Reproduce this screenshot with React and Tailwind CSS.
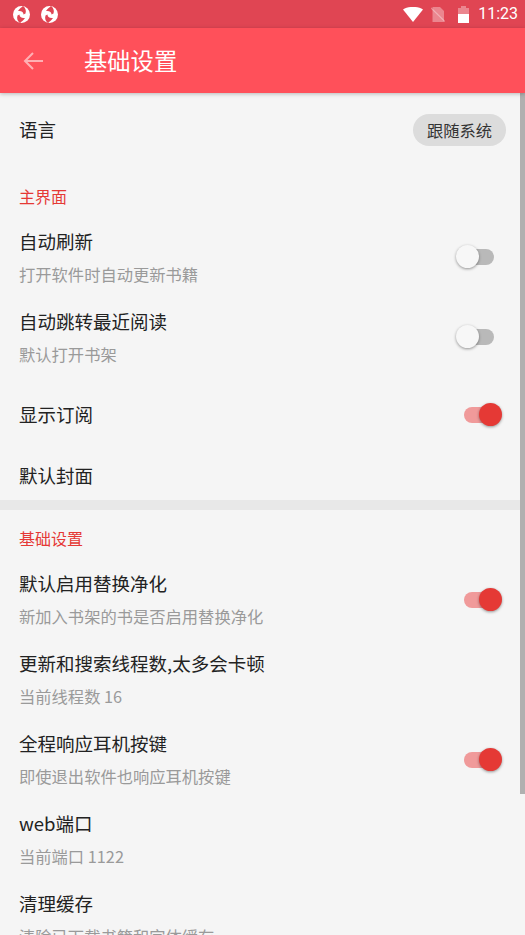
import React from "react";

const font = { fontFamily: '"Noto Sans CJK SC", Roboto, sans-serif' };

function StatusLogo() {
  return (
    <svg width="17" height="17" viewBox="0 0 17 17">
      <circle cx="8.5" cy="8.5" r="8.5" fill="#fff" />
      <path d="M10 0 C12.5 2 13.5 4.5 12.5 7.5 L10.5 8.5 C10.5 6 8.5 4.5 5 5 C6.5 3 8 1.5 10 0 Z" fill="#e04553" />
      <path d="M7 17 C4.5 15 3.5 12.5 4.5 9.5 L6.5 8.5 C6.5 11 8.5 12.5 12 12 C10.5 14 9 15.5 7 17 Z" fill="#e04553" />
    </svg>
  );
}

function Toggle({ on }) {
  if (on) {
    return (
      <div className="relative w-[38px] h-[28px] shrink-0">
        <div className="absolute left-0 right-[2px] top-[6px] h-[16px] rounded-full bg-[#f09a9a]" />
        <div className="absolute right-0 top-[2px] w-[23px] h-[23px] rounded-full bg-[#e53935] shadow-[0_1px_3px_rgba(0,0,0,0.4)]" />
      </div>
    );
  }
  return (
    <div className="relative w-[38px] h-[28px] mr-[8px] shrink-0">
      <div className="absolute left-[2px] right-0 top-[5px] h-[16px] rounded-full bg-[#b9b9b9]" />
      <div className="absolute left-0 top-[1px] w-[23px] h-[23px] rounded-full bg-[#f7f7f7] shadow-[0_1px_3px_rgba(0,0,0,0.4)]" />
    </div>
  );
}

function Row({ title, sub, toggle, height }) {
  return (
    <div className={`flex items-center justify-between pl-[19px] pr-[23px] ${height}`}>
      <div className={sub ? "flex flex-col" : "flex flex-col pb-[2px]"}>
        <div className="text-[18.5px] leading-[24px] text-[#222222] whitespace-nowrap">{title}</div>
        {sub && <div className="mt-[8px] text-[16.3px] leading-[26px] text-[#9a9a9a] whitespace-nowrap">{sub}</div>}
      </div>
      {toggle !== undefined && <Toggle on={toggle} />}
    </div>
  );
}

function SectionTitle({ children, height, top }) {
  return (
    <div className={`pl-[19px] text-[16px] leading-[24px] text-[#e53935] ${height} ${top}`}>{children}</div>
  );
}

export default function App() {
  return (
    <div className="relative w-[525px] h-[935px] overflow-hidden bg-[#f5f5f5]" style={font}>
      <div className="flex items-center justify-between h-[28px] bg-[#e04553] pl-[13px] pr-[7px]">
        <div className="flex items-center gap-[11px]">
          <StatusLogo />
          <StatusLogo />
        </div>
        <div className="flex items-center">
          <svg width="20" height="15" viewBox="0 0 20 15" className="mr-[8px]">
            <path d="M0 2.5 C5.5 -1 14.5 -1 20 2.5 L10 15 Z" fill="#fff" />
          </svg>
          <svg width="14" height="15" viewBox="0 0 14 15" className="mr-[13px]">
            <path d="M1.5 0 H9 L13 4 V15 H1.5 Z" fill="#fff" fillOpacity="0.35" />
            <path d="M0 1 L14 14.5" stroke="#fff" strokeOpacity="0.35" strokeWidth="1.2" />
          </svg>
          <svg width="11" height="17" viewBox="0 0 11 17" className="mr-[9px]">
            <path d="M3 0 H8 V2 H11 V17 H0 V2 H3 Z" fill="#fff" fillOpacity="0.35" />
            <path d="M0 8 H11 V17 H0 Z" fill="#fff" />
          </svg>
          <span className="text-[16px] leading-[20px] text-white" style={{ fontFamily: "Roboto, sans-serif" }}>
            11:23
          </span>
        </div>
      </div>

      <div className="relative z-10 flex items-center h-[65px] bg-[#ff505a] shadow-[0_1px_4px_rgba(0,0,0,0.25)]">
        <svg width="20" height="20" viewBox="0 0 20 20" className="ml-[23px]" fill="none" stroke="#ffb0b4" strokeWidth="2">
          <path d="M20 10 H2 M10 2 L2 10 L10 18" />
        </svg>
        <div className="ml-[41px] text-[23.3px] text-white">基础设置</div>
      </div>

      <div className="flex items-center justify-between h-[74px] pl-[19px] pr-[19px]">
        <div className="text-[18.5px] text-[#222222]">语言</div>
        <div className="flex items-center justify-center w-[93px] h-[32px] rounded-full bg-[#dcdcdc] text-[16.3px] text-[#333333]">
          跟随系统
        </div>
      </div>

      <SectionTitle height="h-[51px]" top="pt-[17px]">主界面</SectionTitle>
      <Row title="自动刷新" sub="打开软件时自动更新书籍" toggle={false} height="h-[80px]" />
      <Row title="自动跳转最近阅读" sub="默认打开书架" toggle={false} height="h-[80px]" />
      <Row title="显示订阅" toggle={true} height="h-[74px]" />
      <Row title="默认封面" height="h-[48px]" />
      <div className="h-[10px] bg-[#e8e8e8]" />

      <SectionTitle height="h-[50px]" top="pt-[16px]">基础设置</SectionTitle>
      <Row title="默认启用替换净化" sub="新加入书架的书是否启用替换净化" toggle={true} height="h-[80px]" />
      <Row title="更新和搜索线程数,太多会卡顿" sub="当前线程数 16" height="h-[80px]" />
      <Row title="全程响应耳机按键" sub="即使退出软件也响应耳机按键" toggle={true} height="h-[80px]" />
      <Row title="web端口" sub="当前端口 1122" height="h-[80px]" />
      <Row title="清理缓存" sub="清除已下载书籍和字体缓存" height="h-[80px]" />

      <div className="absolute right-0 top-[93px] w-[5px] h-[701px] bg-[#b0b0b0]" />
    </div>
  );
}
